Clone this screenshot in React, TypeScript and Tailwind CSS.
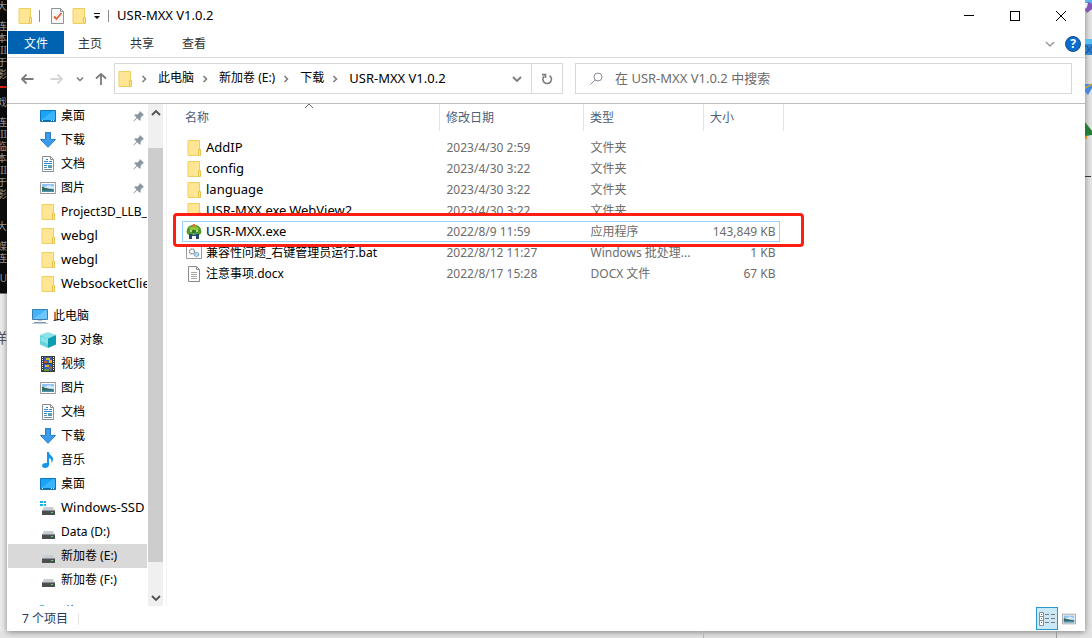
import type { ReactNode } from "react";
import clsx from "clsx";

type IconProps = { className?: string };

const FolderIcon = ({ className = "w-4 h-4" }: IconProps) => (
    <svg viewBox="0 0 16 16" className={clsx("shrink-0", className)}>
        <path d="M2 .5h11.5v15H2z" fill="#ffe694" />
        <path d="M2 .5h11.5v9" fill="none" stroke="#efce60" />
        <path d="M2 .5v15h10.5" fill="none" stroke="#efce60" />
        <path d="M12.5 9.5h2v6h-2z" fill="#ffe694" stroke="#e8c44e" />
    </svg>
);

const DesktopIcon = () => (
    <svg viewBox="0 0 16 16" className="w-4 h-4 shrink-0">
        <path d="M.5 2.5h15v11H.5z" fill="#18a5f8" stroke="#1275b8" />
        <path d="M1 12L13 3h2v9z" fill="#3ab4fb" />
        <path d="M1 12h14v1H1z" fill="#0c6cab" />
        <path d="M2 12h1v1H2zM11 12h1v1h-1zM13 12h1v1h-1z" fill="#fff" />
    </svg>
);

const DownloadIcon = () => (
    <svg viewBox="0 0 16 16" className="w-4 h-4 shrink-0">
        <path
            d="M5.5.5h5v7h5L8 15.3.5 7.5h5z"
            fill="#3c9be8"
            stroke="#2b7fc6"
        />
    </svg>
);

const DocumentIcon = () => (
    <svg viewBox="0 0 16 16" className="w-4 h-4 shrink-0">
        <path d="M2.5.5h8l3 3v12h-11z" fill="#fff" stroke="#8a8f94" />
        <path d="M10.5.5v3h3" fill="none" stroke="#8a8f94" />
        <path
            d="M6 3.5h2M4 5.5h4M9 5.5h3M4 7.5h8M4 9.5h3"
            stroke="#2486d0"
        />
        <path d="M8 9h4v2H8z" fill="#4fa6b5" />
        <path d="M4 11.5h3M8 11.5h4M4 13.5h8" stroke="#6b8ca8" />
    </svg>
);

const PictureIcon = ({ className = "w-4 h-4" }: IconProps) => (
    <svg viewBox="0 0 16 16" className={clsx("shrink-0", className)}>
        <path d="M.5 2.5h15v11H.5z" fill="#fff" stroke="#999" />
        <path d="M2 4h12v8H2z" fill="#8fc1f5" />
        <path d="M4 6.5h3v-1h4v1h3v2H4z" fill="#d8ebfb" />
        <path d="M2 7c2 0 4 1.5 12 2.5V11H2z" fill="#376b5b" />
        <path d="M2 10.5h12V12H2z" fill="#4e8fb4" />
    </svg>
);

const ComputerIcon = () => (
    <svg viewBox="0 0 16 16" className="w-4 h-4 shrink-0">
        <path d="M.5 1.5h15v10H.5z" fill="#43b4fb" stroke="#397fae" />
        <path d="M1 11L14 2h1v9z" fill="#6cc6fc" />
        <path d="M6 12.5h4" stroke="#b9c7d3" />
        <path d="M2 14.5h12" stroke="#8397aa" />
        <path d="M0 15.5h16" stroke="#c0cbd6" />
    </svg>
);

const CubeIcon = () => (
    <svg viewBox="0 0 16 16" className="w-4 h-4 shrink-0">
        <path d="M8 0l8 3-8 4-8-4z" fill="#8de3ea" />
        <path d="M0 3l8 3.5V16l-8-3.5z" fill="#63d3dd" />
        <path d="M16 3L8 6.5V16l8-3.5z" fill="#0d9db1" />
        <path d="M1 5l7 2v5l-7-3z" fill="#8be3e9" />
    </svg>
);

const VideoIcon = () => (
    <svg viewBox="0 0 16 16" className="w-4 h-4 shrink-0">
        <path d="M1 0h14v16H1z" fill="#3c3c3c" />
        <path
            d="M2.5 1v14M13.5 1v14"
            stroke="#f2f2f2"
            strokeDasharray="1 1"
        />
        <path d="M4 1h8v6H4zM4 8h8v7H4z" fill="#3164bd" />
        <path d="M6 2h4v2H6zM9 4h3v3H9zM5 9h4v2H5z" fill="#e6b329" />
        <path d="M4 5h3v2H4zM9 11h3v2H9z" fill="#c95736" />
        <path d="M4 13h5v2H4z" fill="#5f9840" />
    </svg>
);

const MusicIcon = () => (
    <svg viewBox="0 0 16 16" className="w-4 h-4 shrink-0">
        <path
            d="M7 0h2c0 3 4 4 4 7 0 2-1 3-2 4 1-3 0-4-2-5v7c0 2-2 3-4 3s-3-1-3-2.5S4 10.5 7 11z"
            fill="#1496e8"
        />
    </svg>
);

const DriveIcon = ({ windows = false }: { windows?: boolean }) => (
    <svg viewBox="0 0 16 16" className="w-4 h-4 shrink-0">
        {windows && (
            <path
                d="M0 1h3v2H0zM4 1h2v2H4zM0 4h3v2H0zM4 4h2v2H4z"
                fill="#10b4ef"
            />
        )}
        <path d="M4 7h9l2 4H2z" fill="#c9cdd1" />
        <path d="M2 10h13v5H2z" fill="#4a4f53" />
        <path d="M2 10h13v1H2z" fill="#8b9195" />
        <path d="M11 12h2v1h-2z" fill="#45e246" />
    </svg>
);

const NetworkIcon = () => (
    <svg viewBox="0 0 16 16" className="w-4 h-4 shrink-0">
        <circle cx="10" cy="6" r="5" fill="#4fb0d5" />
        <path d="M1 7h10v6H1z" fill="#35a8e8" />
    </svg>
);

const PinIcon = () => (
    <svg viewBox="0 0 12 12" className="w-3 h-3 shrink-0">
        <path
            d="M7 1l4 4-1.5.7-2 2 .2 2.3-1 .7-2.5-2.5L1 11.5l-.5-.5L3.500 7.500 1.300 5.300l.7-1 2.500.2 2-2z"
            fill="#8896a2"
        />
    </svg>
);

const AppIcon = () => (
    <svg viewBox="0 0 16 16" className="w-4 h-4 shrink-0">
        <path d="M1 6c0-3 3-5 7-5s7 2 7 5c1 2 0 5-3 5H4C1 11 0 8 1 6z" fill="#4f9c26" />
        <path d="M3 4c2-2 8-2 10 0l-2 3H5z" fill="#8cc63c" />
        <path d="M7 0h2l1 3H6z" fill="#e8752e" />
        <path d="M4 6h2v2H4zM10 6h2v2h-2z" fill="#b8d98a" />
        <path d="M6 6h4v3H6z" fill="#3b7a1c" />
        <path d="M3 10h3v1h4v-1h3v5h-3v-3H6v3H3z" fill="#24466d" />
        <path d="M7 9h2v2H7z" fill="#5b90c3" />
    </svg>
);

const BatchIcon = () => (
    <svg viewBox="0 0 16 16" className="w-4 h-4 shrink-0">
        <path d="M.5 1.5h15v12H.5z" fill="#fff" stroke="#9a9a9a" />
        <circle cx="6" cy="6.5" r="2.5" fill="#fff" stroke="#8c979f" strokeWidth="1.5" strokeDasharray="1.5 .5" />
        <circle cx="10.5" cy="9.5" r="2" fill="#d5eafa" stroke="#7ca5c4" strokeWidth="1.5" strokeDasharray="1.5 .5" />
    </svg>
);

const TextFileIcon = () => (
    <svg viewBox="0 0 16 16" className="w-4 h-4 shrink-0">
        <path d="M2.5.5h8l3 3v12h-11z" fill="#fff" stroke="#8a8a8a" />
        <path d="M10.5.5v3h3" fill="none" stroke="#8a8a8a" />
        <path d="M5 6.5h6M5 8.5h6M5 10.5h6M5 12.5h6" stroke="#a8a8a8" />
    </svg>
);

const Chevron = ({
    dir,
    className,
}: {
    dir: "up" | "down" | "right";
    className?: string;
}) => (
    <svg
        viewBox="0 0 10 10"
        className={clsx("shrink-0", className)}
        fill="none"
        stroke="currentColor"
    >
        {dir === "up" && <path d="M1 7l4-4 4 4" />}
        {dir === "down" && <path d="M1 3l4 4 4-4" />}
        {dir === "right" && <path d="M3.5 2l3 3-3 3" />}
    </svg>
);

const ArrowIcon = ({ d }: { d: string }) => (
    <svg
        viewBox="0 0 14 14"
        className="w-3.5 h-3.5 shrink-0"
        fill="none"
        stroke="currentColor"
        strokeWidth="1.8"
    >
        <path d={d} />
    </svg>
);

type TreeItem = {
    label: string;
    icon: ReactNode;
    latin?: boolean;
    pinned?: boolean;
    root?: boolean;
    active?: boolean;
};

const quickAccess: TreeItem[] = [
    { label: "桌面", icon: <DesktopIcon />, pinned: true },
    { label: "下载", icon: <DownloadIcon />, pinned: true },
    { label: "文档", icon: <DocumentIcon />, pinned: true },
    { label: "图片", icon: <PictureIcon />, pinned: true },
    { label: "Project3D_LLB_", icon: <FolderIcon /> },
    { label: "webgl", icon: <FolderIcon />, latin: true },
    { label: "webgl", icon: <FolderIcon />, latin: true },
    { label: "WebsocketClie", icon: <FolderIcon />, latin: true },
];

const computer: TreeItem[] = [
    { label: "此电脑", icon: <ComputerIcon />, root: true },
    { label: "3D 对象", icon: <CubeIcon /> },
    { label: "视频", icon: <VideoIcon /> },
    { label: "图片", icon: <PictureIcon /> },
    { label: "文档", icon: <DocumentIcon /> },
    { label: "下载", icon: <DownloadIcon /> },
    { label: "音乐", icon: <MusicIcon /> },
    { label: "桌面", icon: <DesktopIcon /> },
    { label: "Windows-SSD", icon: <DriveIcon windows />, latin: true },
    { label: "Data (D:)", icon: <DriveIcon /> },
    { label: "新加卷 (E:)", icon: <DriveIcon />, active: true },
    { label: "新加卷 (F:)", icon: <DriveIcon /> },
];

const network: TreeItem[] = [
    { label: "网络", icon: <NetworkIcon />, root: true },
];

const files = [
    { name: "AddIP", date: "2023/4/30 2:59", type: "文件夹", size: "", icon: <FolderIcon />, latin: true },
    { name: "config", date: "2023/4/30 3:22", type: "文件夹", size: "", icon: <FolderIcon />, latin: true },
    { name: "language", date: "2023/4/30 3:22", type: "文件夹", size: "", icon: <FolderIcon />, latin: true },
    { name: "USR-MXX.exe.WebView2", date: "2023/4/30 3:22", type: "文件夹", size: "", icon: <FolderIcon />, latin: true },
    { name: "USR-MXX.exe", date: "2022/8/9 11:59", type: "应用程序", size: "143,849 KB", icon: <AppIcon />, latin: true, marked: true },
    { name: "兼容性问题_右键管理员运行.bat", date: "2022/8/12 11:27", type: "Windows 批处理...", size: "1 KB", icon: <BatchIcon /> },
    { name: "注意事项.docx", date: "2022/8/17 15:28", type: "DOCX 文件", size: "67 KB", icon: <TextFileIcon /> },
];

const crumbs = ["此电脑", "新加卷 (E:)", "下载", "USR-MXX V1.0.2"];

// paragraphs of the console window behind
const consoleGroups = [
    { lines: ["大"] },
    { lines: ["连", "本", "II", "于", "影"], underline: true },
    { lines: ["戏"] },
    { lines: ["连", "II", "临", "本", "II", "于", "影"], wide: true },
    { lines: ["大"] },
    { lines: ["媒", "连"] },
    { lines: ["U"] },
];

const TreeGroup = ({ items }: { items: TreeItem[] }) => (
    <ul>
        {items.map((item, i) => (
            <li key={i}>
                <button
                    className={clsx(
                        "flex h-6 w-full items-center gap-[5px] overflow-hidden whitespace-nowrap text-left",
                        item.root ? "pl-6" : "pl-8",
                        item.active && "bg-[#d9d9d9]"
                    )}
                >
                    {item.icon}
                    <span
                        className={clsx(
                            "flex-1",
                            item.latin && "pb-0.5 text-[13px]"
                        )}
                    >
                        {item.label}
                    </span>
                    {item.pinned && (
                        <span className="pr-0.5">
                            <PinIcon />
                        </span>
                    )}
                </button>
            </li>
        ))}
    </ul>
);

const TitleBar = () => (
    <header className="flex h-[31px] items-center pr-px pl-2.5">
        <FolderIcon />
        <span className="mr-[11px] ml-1.5 h-3 w-px bg-[#8c8c8c]" />
        <button aria-label="属性">
            <svg viewBox="0 0 14 16" className="h-4 w-3.5">
                <path d="M.5.5h9l3 3v12H.5z" fill="#f7f7f7" stroke="#8f959b" />
                <path d="M9.5.5v3h3" fill="none" stroke="#8f959b" />
                <path d="M3 8.5L5.5 11l5-6" fill="none" stroke="#e8602c" strokeWidth="1.8" />
            </svg>
        </button>
        <button aria-label="新建文件夹" className="ml-1.5">
            <FolderIcon />
        </button>
        <button aria-label="自定义快速访问工具栏" className="ml-1.5">
            <svg viewBox="0 0 8 8" className="h-2 w-2">
                <path d="M1 1h6v1H1zM1 4h6L4 7z" fill="#111" />
            </svg>
        </button>
        <span className="mr-2 ml-[7px] h-3 w-px bg-[#8c8c8c]" />
        <h1 className="flex-1 pb-0.5 text-[13px]">USR-MXX V1.0.2</h1>
        <button aria-label="最小化" className="flex h-full w-[46px] items-center justify-center">
            <span className="h-px w-2.5 bg-black" />
        </button>
        <button aria-label="最大化" className="flex h-full w-[46px] items-center justify-center">
            <span className="h-2.5 w-2.5 border border-black" />
        </button>
        <button aria-label="关闭" className="flex h-full w-[46px] items-center justify-center">
            <svg viewBox="0 0 10 10" className="h-2.5 w-2.5" stroke="#000">
                <path d="M0 0l10 10M10 0L0 10" />
            </svg>
        </button>
    </header>
);

const Ribbon = () => (
    <nav className="flex h-[27px] items-start border-b border-[#dadada] pl-px">
        <button className="h-[23px] bg-[#0063b1] px-4 pt-0.5 text-white">文件</button>
        {["主页", "共享", "查看"].map((tab) => (
            <button key={tab} className="h-[23px] px-3.5 pt-0.5 text-[#333]">
                {tab}
            </button>
        ))}
        <div className="ml-auto flex h-[25px] items-center gap-2.5 pr-1">
            <button aria-label="展开功能区" className="text-[#999]">
                <Chevron dir="down" className="h-2.5 w-2.5 stroke-[1.5]" />
            </button>
            <button
                aria-label="帮助"
                className="h-4 w-4 rounded-full border border-[#1b4f82] bg-[#0a6cce] text-[12px] leading-[14px] font-bold text-white"
            >
                ?
            </button>
        </div>
    </nav>
);

const AddressBar = () => (
    <div className="flex h-[46px] items-center border-b border-[#bdbdbd] pr-[13px] pb-1 text-[#7a7a7a]">
        <div className="flex w-[107px] shrink-0 items-center pl-[13px]">
            <button aria-label="后退">
                <ArrowIcon d="M13.5 7H2M6.5 2.5L2 7l4.5 4.5" />
            </button>
            <button aria-label="前进" className="ml-4 text-[#d5d5d5]">
                <ArrowIcon d="M.5 7H12M7.5 2.5L12 7l-4.500 4.500" />
            </button>
            <button aria-label="最近浏览的位置" className="ml-3">
                <Chevron dir="down" className="h-2 w-2 stroke-[1.8]" />
            </button>
            <button aria-label="上移" className="ml-2.5">
                <ArrowIcon d="M7 13V2M2 6.5L7 2l5 4.5" />
            </button>
        </div>
        <div className="flex h-[31px] w-[449px] items-center border border-[#d9d9d9]">
            <FolderIcon className="ml-0.5 h-4 w-4" />
            {crumbs.map((crumb) => (
                <span key={crumb} className="flex items-center">
                    <Chevron dir="right" className="mr-[9px] ml-1.5 h-2.5 w-2.5 stroke-[1.5]" />
                    <button
                        className={clsx(
                            "pb-0.5 whitespace-nowrap text-black",
                            crumb.startsWith("USR") && "text-[13px]"
                        )}
                    >
                        {crumb}
                    </button>
                </span>
            ))}
            <button aria-label="展开地址" className="ml-auto px-[9px]">
                <Chevron dir="down" className="h-2.5 w-2.5 stroke-[1.8]" />
            </button>
            <button
                aria-label="刷新"
                className="flex h-full w-[31px] items-center justify-center border-l border-[#d9d9d9]"
            >
                <svg viewBox="0 0 12 12" className="h-3 w-3" fill="none" stroke="currentColor" strokeWidth="1.6">
                    <path d="M8.500 2.600A4.300 4.300 0 1 1 3 3.300" />
                    <path d="M1 1.600h3.500V5" />
                </svg>
            </button>
        </div>
        <label className="ml-3 flex h-[31px] flex-1 items-center border border-[#d9d9d9] pl-3.5">
            <svg viewBox="0 0 13 13" className="h-[13px] w-[13px] shrink-0" fill="none" stroke="#8d8d9b">
                <circle cx="8" cy="5" r="4" />
                <path d="M5.2 7.8L.5 12.5" />
            </svg>
            <input
                type="search"
                aria-label="搜索"
                placeholder="在 USR-MXX V1.0.2 中搜索"
                className="ml-3 flex-1 pb-0.5 text-[13px] outline-none placeholder:text-[#6d6d6d]"
            />
        </label>
    </div>
);

const Sidebar = () => (
    <aside className="flex w-[160px] shrink-0 border-r border-[#f3f3f3]">
        <div className="flex flex-1 flex-col gap-2 overflow-hidden pl-px">
            <TreeGroup items={quickAccess} />
            <TreeGroup items={computer} />
            <TreeGroup items={network} />
        </div>
        <div className="mr-[3px] ml-px flex w-[15px] shrink-0 flex-col bg-[#f0f0f0] text-[#505050]">
            <button aria-label="向上滚动" className="flex h-11 justify-center pt-1">
                <Chevron dir="up" className="h-2.5 w-2.5 stroke-[1.8]" />
            </button>
            <div className="flex-1 bg-[#cdcdcd]" />
            <button aria-label="向下滚动" className="flex h-11 items-end justify-center pb-[3px]">
                <Chevron dir="down" className="h-2.5 w-2.5 stroke-[1.8]" />
            </button>
        </div>
    </aside>
);

const FileList = () => (
    <main className="relative flex-1 overflow-hidden pl-[15px]">
        <Chevron dir="up" className="absolute top-[-3px] left-[137px] h-2.5 w-2.5 text-[#666]" />
        <table className="w-[602px] table-fixed border-collapse text-left">
            <colgroup>
                <col />
                <col className="w-36" />
                <col className="w-[120px]" />
                <col className="w-20" />
            </colgroup>
            <thead>
                <tr className="h-[27px] text-[#4c607a]">
                    {["名称", "修改日期", "类型", "大小"].map((title, i) => (
                        <th
                            key={title}
                            className={clsx(
                                "border-r border-[#e3e3e3] p-0 font-normal",
                                i === 0 ? "pl-[3px]" : "pl-1.5"
                            )}
                        >
                            {title}
                        </th>
                    ))}
                </tr>
            </thead>
            <tbody className="text-[#6d6d6d] before:block before:h-1.5">
                {files.map((file) => (
                    <tr
                        key={file.name}
                        className={clsx("h-[21px]", file.marked && "relative z-10")}
                    >
                        <td className="p-0 pl-1">
                            {file.marked && (
                                <>
                                    <span className="absolute -top-2 -right-5 -bottom-[5px] -left-[9px] -z-10 rounded-[4px] border-3 border-[#ff1e12] bg-white" />
                                    <span className="absolute inset-y-0 right-1 left-0 -z-10 border border-[#99d1ff]" />
                                </>
                            )}
                            <span className="flex items-center gap-1 whitespace-nowrap text-black">
                                {file.icon}
                                <span className={clsx(file.latin && "-my-1 pb-0.5 text-[13px]")}>
                                    {file.name}
                                </span>
                            </span>
                        </td>
                        <td className="p-0 pl-[7px]">{file.date}</td>
                        <td className="p-0 pl-[7px] whitespace-nowrap">{file.type}</td>
                        <td className="p-0 pr-2 text-right whitespace-nowrap">{file.size}</td>
                    </tr>
                ))}
            </tbody>
        </table>
    </main>
);

const StatusBar = () => (
    <footer className="flex h-[25px] shrink-0 items-center pr-[9px] pl-[15px] text-[#1e395b]">
        <span>7 个项目</span>
        <span className="ml-2.5 h-3 w-px bg-[#e8e8e8]" />
        <button
            aria-label="详细信息"
            className="ml-auto flex h-[23px] w-[22px] items-center justify-center border border-[#2a98d0] bg-[#cbe8f6]"
        >
            <svg viewBox="0 0 16 14" className="h-3.5 w-4">
                <path d="M.5.5h4v13h-4zM.5 4.5h4M.5 8.5h4" fill="#fff" stroke="#8e8e8e" />
                <path d="M2 2h1v1H2z" fill="#3c8c5a" />
                <path d="M2 6h1v1H2z" fill="#2d7fe0" />
                <path d="M2 10h1v1H2z" fill="#e03a2d" />
                <path d="M6 2.5h4M12 2.5h4M6 6.5h4M12 6.5h4M6 10.5h4M12 10.5h4" stroke="#7a7a7a" />
            </svg>
        </button>
        <button aria-label="大缩略图" className="ml-1">
            <PictureIcon className="h-3.5 w-3.5" />
        </button>
    </footer>
);

const App = () => {
    return (
        <div className="flex h-screen flex-col overflow-hidden bg-[#e4e4e4] font-['Noto_Sans','Noto_Sans_CJK_SC',sans-serif] text-[12px] leading-4 text-black">
            <div className="flex min-h-0 flex-1">
                {/* windows behind, left side */}
                <div className="flex w-[7px] shrink-0 flex-col bg-[#ebebeb]" aria-hidden="true">
                    <div className="flex h-[294px] flex-col gap-2 overflow-hidden border-b border-[#777] bg-[#0c0c0c] text-[10px] leading-3 text-[#9a9a9a]">
                        {consoleGroups.map((group, i) => (
                            <div
                                key={i}
                                className={clsx(
                                    "flex shrink-0 flex-col items-end",
                                    group.underline && "border-b-2 border-[#d81e14] pb-1.5",
                                    group.wide && "pb-3"
                                )}
                            >
                                {group.lines.map((line, j) => (
                                    <span key={j} className="h-3">
                                        {line}
                                    </span>
                                ))}
                            </div>
                        ))}
                    </div>
                    <div className="mt-9 flex justify-end overflow-hidden text-[14px] text-[#555]">
                        样
                    </div>
                </div>

                <div className="flex min-w-0 flex-1 flex-col bg-white shadow-[0_1px_6px_rgba(0,0,0,0.45)]">
                    <TitleBar />
                    <Ribbon />
                    <AddressBar />
                    <div className="flex min-h-0 flex-1">
                        <Sidebar />
                        <FileList />
                    </div>
                    <StatusBar />
                </div>

                {/* desktop icons peeking out on the right */}
                <div className="w-[7px] shrink-0 overflow-hidden" aria-hidden="true">
                    <svg viewBox="0 0 7 200" className="h-[200px] w-[7px]">
                        <path d="M0 0h7v5L0 2z" fill="#58b7ec" />
                        <path d="M0 3l4-1 3 2v5l-5 4-2-3z" fill="#8256b5" />
                        <path d="M0 3l3 0-1 4-2 2z" fill="#eee" />
                        <path d="M0 39h7v16H0z" fill="#2f83cf" />
                        <path d="M0 39h7v5H0z" fill="#59bdf0" />
                        <path d="M0 46l3 1v5l-3 1M7 46l-3 4 3 3" fill="none" stroke="#174f91" />
                        <path d="M0 84h7v4l-4 7-3-3z" fill="#4389e0" />
                        <path d="M0 88l7-4" stroke="#d8a727" strokeWidth="1.5" />
                        <path d="M0 122l7 9v4l-7 1z" fill="#257a34" />
                        <path d="M0 136h2v3H0z" fill="#dd8a1c" />
                        <path d="M0 176.5h6" stroke="#333" />
                    </svg>
                </div>
            </div>
            <div className="flex h-[7px] shrink-0 justify-end" aria-hidden="true">
                <span className="mr-[352px] w-px bg-[#b5b5b5]" />
                <span className="mr-[35px] w-px bg-[#999]" />
            </div>
        </div>
    );
};

export default App;
